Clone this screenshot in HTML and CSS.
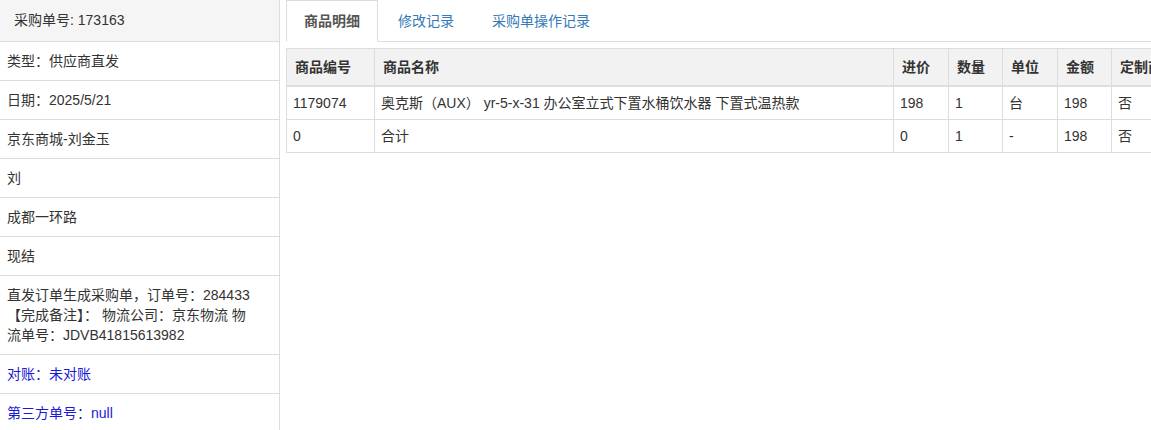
FILE: index.html
```html
<!DOCTYPE html>
<html>
<head>
  <meta charset="UTF-8">
  <title>采购单详情</title>
  <link rel="stylesheet" href="styles.css">
</head>
<body>
  <div class="page">
    <div class="side">
      <div class="sideHead">采购单号: 173163</div>
      <div class="sideItem">类型：供应商直发</div>
      <div class="sideItem">日期：2025/5/21</div>
      <div class="sideItem">京东商城-刘金玉</div>
      <div class="sideItem">刘</div>
      <div class="sideItem">成都一环路</div>
      <div class="sideItem">现结</div>
      <div class="sideItem">直发订单生成采购单，订单号：284433【完成备注】： 物流公司：京东物流 物流单号：JDVB41815613982</div>
      <div class="sideItem blue">对账：未对账</div>
      <div class="sideItem blue">第三方单号：null</div>
    </div>

    <div class="main">
      <ul class="tabs">
        <li class="active"><a href="#">商品明细</a></li>
        <li><a href="#">修改记录</a></li>
        <li><a href="#">采购单操作记录</a></li>
      </ul>

      <table class="goods">
        <colgroup>
          <col class="cNo">
          <col class="cName">
          <col class="cPrice">
          <col class="cQty">
          <col class="cUnit">
          <col class="cSum">
          <col class="cCustom">
          <col class="cMemo">
        </colgroup>
        <thead>
          <tr>
            <th>商品编号</th>
            <th>商品名称</th>
            <th>进价</th>
            <th>数量</th>
            <th>单位</th>
            <th>金额</th>
            <th>定制商品</th>
            <th>备注</th>
          </tr>
        </thead>
        <tbody>
          <tr>
            <td>1179074</td>
            <td>奥克斯（AUX） yr-5-x-31 办公室立式下置水桶饮水器 下置式温热款</td>
            <td>198</td>
            <td>1</td>
            <td>台</td>
            <td>198</td>
            <td>否</td>
            <td></td>
          </tr>
          <tr>
            <td>0</td>
            <td>合计</td>
            <td>0</td>
            <td>1</td>
            <td>-</td>
            <td>198</td>
            <td>否</td>
            <td></td>
          </tr>
        </tbody>
      </table>
    </div>
  </div>
</body>
</html>
```

FILE: styles.css
```css
body {
  margin: 0;
  color: #333;
  background-color: #fff;
  font-family: "Liberation Sans", "Noto Sans CJK SC", sans-serif;
  font-size: 14px;
  line-height: 20px;
}

.page {
  display: flex;
  height: 100vh;
  overflow: hidden;
}

/* left info column */
.side {
  width: 279px;
  flex-shrink: 0;
  border-right: 1px solid #ddd;
}
.sideHead {
  padding: 10px 14px 11px 14px;
  background-color: #f5f5f5;
  border-bottom: 1px solid #ddd;
}
.sideItem {
  padding: 9px 22px 9px 7px;
  border-bottom: 1px solid #ddd;
}
.sideItem.blue {
  color: #1a1ad6;
}

/* right panel */
.main {
  flex: 1;
  min-width: 0;
  margin-left: 6px;
  overflow: hidden;
}

.tabs {
  display: flex;
  margin: 0;
  padding: 0;
  list-style: none;
  border-bottom: 1px solid #ddd;
}
.tabs li {
  margin-bottom: -1px;
  margin-right: 2px;
}
.tabs a {
  display: block;
  padding: 10px 17px;
  border: 1px solid transparent;
  color: #337ab7;
  text-decoration: none;
}
.tabs li.active a {
  color: #555;
  font-weight: bold;
  background-color: #fff;
  border-color: #ddd #ddd transparent #ddd;
}

.goods {
  margin-top: 6px;
  border-collapse: collapse;
  table-layout: fixed;
  width: 1000px;
}
.goods th, .goods td {
  border: 1px solid #ddd;
  text-align: left;
  white-space: nowrap;
  overflow: hidden;
}
.goods th {
  padding: 8px 8px;
  background-color: #f2f2f2;
  border-bottom: 2px solid #ddd;
}
.goods td {
  padding: 6px 6px;
}
.cNo { width: 88px; }
.cName { width: 519px; }
.cPrice { width: 55px; }
.cQty { width: 54px; }
.cUnit { width: 55px; }
.cSum { width: 54px; }
.cCustom { width: 80px; }
.cMemo { width: 95px; }
```
